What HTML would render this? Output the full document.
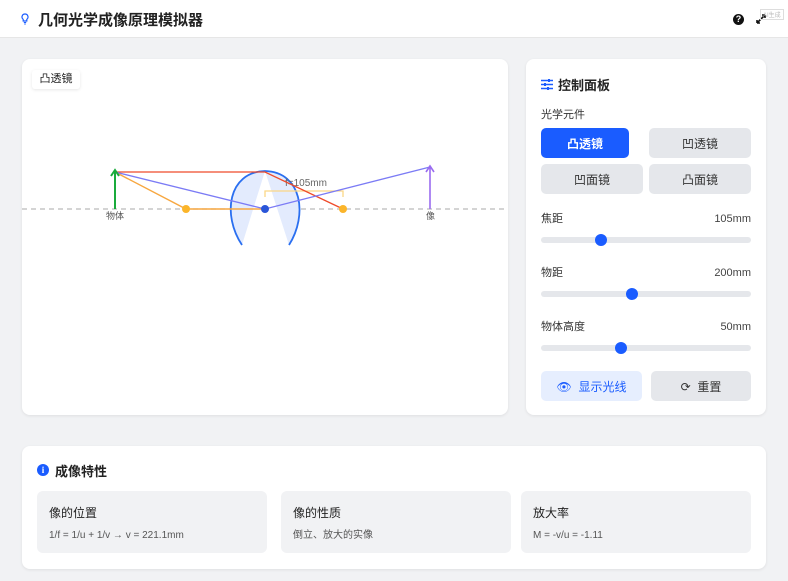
<!DOCTYPE html>
<html><head><meta charset="utf-8"><style>
*{box-sizing:border-box;margin:0;padding:0}
body{width:788px;height:581px;background:#f1f2f4;font-family:"Liberation Sans","Noto Sans CJK SC",sans-serif;position:relative;overflow:hidden;color:#222}
.abs{position:absolute}
.card{position:absolute;background:#fff;border-radius:8px;box-shadow:0 1px 3px rgba(0,0,0,.08)}
.btn{position:absolute;border-radius:5px;font-size:12px;display:flex;align-items:center;justify-content:center;background:#e5e7eb;color:#333}
.lab,.val{position:absolute;font-size:11px;color:#333;line-height:14px;height:14px}
.val{color:#444;right:15px}
.track{position:absolute;left:15px;width:210px;height:6px;border-radius:3px;background:#e5e7eb}
.thumb{position:absolute;width:12px;height:12px;border-radius:50%;background:#1a5cff;top:-3px}
.sub{position:absolute;top:45px;height:62px;width:230px;background:#f1f2f4;border-radius:6px;padding:13px 12px}
.sub h4{font-size:12px;font-weight:normal;color:#222;line-height:18px;height:18px;margin-bottom:7px}
.sub p{font-size:10px;color:#555;line-height:14px;height:14px;white-space:nowrap}
</style></head><body>
<div class="abs" style="left:0;top:0;width:788px;height:38px;background:#fff;border-bottom:1px solid #e6e6e6"></div>
<svg class="abs" style="left:21px;top:13px" width="8" height="12" viewBox="0 0 8 12"><path d="M4 1a3 3 0 0 0-1.8 5.4V8h3.6V6.4A3 3 0 0 0 4 1z" fill="none" stroke="#1a5cff" stroke-width="1.2"/><path d="M2.8 9.5h2.4M3.2 11h1.6" stroke="#1a5cff" stroke-width="1"/></svg>
<div class="abs" style="left:38px;top:9px;font-size:15px;font-weight:bold;color:#222">几何光学成像原理模拟器</div>
<div class="abs" style="left:733px;top:14px;width:11px;height:11px;border-radius:50%;background:#111;color:#fff;font-size:9px;font-weight:bold;text-align:center;line-height:11px">?</div>
<svg class="abs" style="left:755px;top:13px" width="12" height="12" viewBox="0 0 12 12"><path d="M2 10L10 2M2 10v-3M2 10h3M10 2v3M10 2H7" stroke="#111" stroke-width="1.6" fill="none"/></svg>
<div class="abs" style="left:760px;top:9px;font-size:6px;color:#bbb;border:1px solid #ddd;padding:0 2px">AI生成</div>

<div class="card" style="left:22px;top:59px;width:486px;height:356px">
<div class="abs" style="left:10px;top:11px;width:48px;height:19px;font-size:11px;line-height:19px;text-align:center;box-shadow:0 1px 3px rgba(0,0,0,.1);border-radius:3px">凸透镜</div>
</div>
<svg class="abs" style="left:22px;top:59px" width="486" height="356" viewBox="22 59 486 356">
<line x1="22" y1="209" x2="508" y2="209" stroke="#bbb" stroke-dasharray="5,4" stroke-width="1.2"/>
<path d="M242 245 C222 215 228 172 265 171 C302 172 308 215 289 245 Z" fill="#e3ebfd"/>
<path d="M265 171 L242 245 L289 245 Z" fill="#fff"/>
<path d="M242 245 C222 215 228 172 265 171 C302 172 308 215 289 245" fill="none" stroke="#2a6ff0" stroke-width="1.8"/>
<path d="M265 197 V191 H343 V197" fill="none" stroke="#fbd786" stroke-width="1.3"/>
<text x="285" y="186" font-size="10" fill="#666" font-family="Liberation Sans">f=105mm</text>
<path d="M115 172 L186 209 L265 209" fill="none" stroke="#f7a740" stroke-width="1.4"/>
<path d="M115 172 L265 172 L343 209" fill="none" stroke="#ef4a2a" stroke-width="1.3"/>
<path d="M115 172 L265 209 L430 167" fill="none" stroke="#7b7bf5" stroke-width="1.3"/>
<circle cx="186" cy="209" r="4" fill="#fbb52a"/><circle cx="343" cy="209" r="4" fill="#fbb52a"/>
<circle cx="265" cy="209" r="4" fill="#2a55d8"/>
<path d="M115 209V171M111 176L115 170L119 176" stroke="#1aab3c" stroke-width="2" fill="none"/>
<path d="M430 209V167M426 172L430 166L434 172" stroke="#9a6cf0" stroke-width="1.6" fill="none"/>
<text x="106" y="219" font-size="9" fill="#555" font-family="Noto Sans CJK SC">物体</text>
<text x="426" y="219" font-size="9" fill="#555" font-family="Noto Sans CJK SC">像</text>
</svg>

<div class="card" style="left:526px;top:59px;width:240px;height:356px">
<svg class="abs" style="left:15px;top:20px" width="12" height="11" viewBox="0 0 12 11"><path d="M0 1.5h12M0 5.5h12M0 9.5h12" stroke="#1a5cff" stroke-width="1.4"/><rect x="7" y="0" width="2" height="3" fill="#1a5cff"/><rect x="3" y="4" width="2" height="3" fill="#1a5cff"/><rect x="6" y="8" width="2" height="3" fill="#1a5cff"/></svg>
<div class="abs" style="left:32px;top:16px;font-size:13px;font-weight:bold">控制面板</div>
<div class="lab" style="left:15px;top:49px">光学元件</div>
<div class="btn" style="left:15px;top:69px;width:88px;height:30px;background:#1a5cff;color:#fff;font-weight:bold">凸透镜</div>
<div class="btn" style="left:123px;top:69px;width:102px;height:30px">凹透镜</div>
<div class="btn" style="left:15px;top:105px;width:102px;height:30px">凹面镜</div>
<div class="btn" style="left:123px;top:105px;width:102px;height:30px">凸面镜</div>
<div class="lab" style="left:15px;top:153px">焦距</div><div class="val" style="top:153px">105mm</div>
<div class="track" style="top:178px"><div class="thumb" style="left:54px"></div></div>
<div class="lab" style="left:15px;top:207px">物距</div><div class="val" style="top:207px">200mm</div>
<div class="track" style="top:232px"><div class="thumb" style="left:85px"></div></div>
<div class="lab" style="left:15px;top:261px">物体高度</div><div class="val" style="top:261px">50mm</div>
<div class="track" style="top:286px"><div class="thumb" style="left:74px"></div></div>
<div class="btn" style="left:15px;top:312px;width:101px;height:30px;background:#e6eefe;color:#1a5cff">👁&nbsp;&nbsp;显示光线</div>
<div class="btn" style="left:125px;top:312px;width:100px;height:30px">⟳&nbsp;&nbsp;重置</div>
</div>

<div class="card" style="left:22px;top:446px;width:744px;height:123px">
<div class="abs" style="left:15px;top:18px;width:12px;height:12px;border-radius:50%;background:#1a5cff;color:#fff;font-size:9px;font-weight:bold;text-align:center;line-height:12px;font-family:'Liberation Serif'">i</div>
<div class="abs" style="left:33px;top:15px;font-size:13px;font-weight:bold">成像特性</div>
<div class="sub" style="left:15px"><h4>像的位置</h4><p>1/f = 1/u + 1/v → v = 221.1mm</p></div>
<div class="sub" style="left:259px"><h4>像的性质</h4><p>倒立、放大的实像</p></div>
<div class="sub" style="left:499px"><h4>放大率</h4><p>M = -v/u = -1.11</p></div>
</div>
</body></html>
